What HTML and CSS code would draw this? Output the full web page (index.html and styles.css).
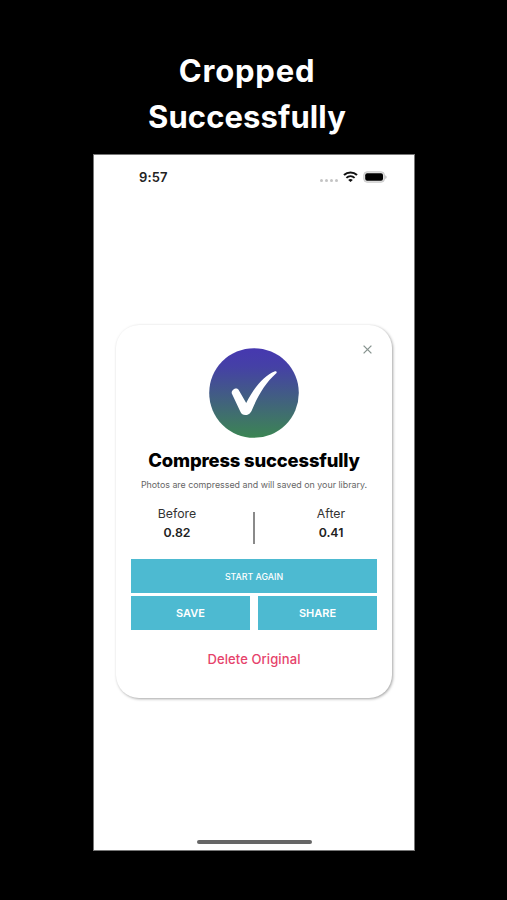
FILE: index.html
```
<!DOCTYPE html>
<html lang="en">
<head>
    <meta charset="UTF-8">
    <meta name="viewport" content="width=device-width, initial-scale=1.0">
    <title>Cropped Successfully</title>
    <link rel="stylesheet" href="styles.css">
</head>
<body>
    <h1 class="headline"><span class="line-one">Cropped</span><br><span class="line-two">Successfully</span></h1>
    <div class="screen">
        <!-- Status bar -->
        <div class="status-bar">
            <span class="time">9:57</span>
            <div class="status-icons">
                <div class="dots"><i></i><i></i><i></i><i></i></div>
                <svg class="wifi" width="15" height="11" viewBox="0 0 15 11">
                    <path d="M1 4.1C4.7 .6 10.3 .6 14 4.1" fill="none" stroke="#111" stroke-width="2.1"/>
                    <path d="M3.4 6.9C5.8 4.7 9.2 4.7 11.6 6.9" fill="none" stroke="#111" stroke-width="1.9"/>
                    <path d="M5.2 8.9C6.5 7.7 8.5 7.7 9.8 8.9L7.5 11Z" fill="#111"/>
                </svg>
                <svg class="battery" width="24" height="12" viewBox="0 0 24 12">
                    <rect x=".8" y=".8" width="20.6" height="10.4" rx="3.2" fill="#e4e4e4" stroke="#c8c8c8"/>
                    <rect x="2.2" y="2.2" width="17.8" height="7.6" rx="2" fill="#000"/>
                    <path d="M22.4 4.2V8C23.9 7.2 23.9 5 22.4 4.2Z" fill="#aaa"/>
                </svg>
            </div>
        </div>

        <!-- Result popup -->
        <div class="card">
            <svg class="close" width="9" height="9" viewBox="0 0 9 9">
                <path d="M.6 .6L8.4 8.4M8.4 .6L.6 8.4" stroke="#87938f" stroke-width="1.3"/>
            </svg>
            <svg class="check" width="90" height="90" viewBox="0 0 90 90">
                <defs>
                    <linearGradient id="fade" x1="0" y1="0" x2="0" y2="1">
                        <stop offset="0" stop-color="#4638b0"/>
                        <stop offset=".2" stop-color="#4540a6"/>
                        <stop offset=".8" stop-color="#3f7468"/>
                        <stop offset="1" stop-color="#3b8553"/>
                    </linearGradient>
                </defs>
                <circle cx="45" cy="45" r="44.8" fill="url(#fade)"/>
                <path d="M22.8 45.5C21.8 42 27.4 38.6 29.4 41.6L37.2 55C44.5 40.5 54.5 27.6 66 23.2C67.6 22.8 68.4 24.4 67 25.6C57 34.6 49.6 46.4 43.4 61C41.8 65.6 39 67.2 36.2 67C34 67 32.4 66 31.4 63.8Z" fill="#fff"/>
            </svg>
            <h2 class="title">Compress successfully</h2>
            <p class="note">Photos are compressed and will saved on your library.</p>
            <div class="stats">
                <div class="stat">
                    <span class="label">Before</span>
                    <span class="value">0.82</span>
                </div>
                <div class="divider"></div>
                <div class="stat">
                    <span class="label">After</span>
                    <span class="value">0.41</span>
                </div>
            </div>
            <button class="btn btn-small">START AGAIN</button>
            <div class="btn-row">
                <button class="btn">SAVE</button>
                <button class="btn">SHARE</button>
            </div>
            <a class="delete">Delete Original</a>
        </div>

        <div class="home-bar"></div>
    </div>
</body>
</html>
```

FILE: styles.css
```
* {
    box-sizing: border-box;
}
body {
    margin: 0;
    height: 900px;
    background-color: #000;
    font-family: Inter, "Liberation Sans", sans-serif;
    overflow: hidden;
}
.headline {
    margin: 0;
    padding: 48px 0 0 0;
    width: 494px;
    height: 154px;
    color: #fff;
    font-size: 31px;
    font-weight: 700;
    line-height: 46px;
    text-align: center;
}
.line-one {
    letter-spacing: 0.8px;
}
.line-two {
    letter-spacing: 0.1px;
}
.screen {
    display: flex;
    flex-direction: column;
    align-items: center;
    margin-left: 93px;
    width: 322px;
    height: 697px;
    background-color: #fff;
    border: 1px solid #777;
}
.status-bar {
    display: flex;
    justify-content: space-between;
    align-items: center;
    width: 100%;
    height: 43px;
    padding: 0 27px 0 45px;
}
.time {
    color: #222;
    font-size: 13px;
    font-weight: 600;
    letter-spacing: 0.1px;
}
.status-icons {
    display: flex;
    align-items: center;
    gap: 5px;
}
.dots {
    display: flex;
    gap: 2px;
    padding-top: 8px;
}
.dots i {
    width: 3px;
    height: 3px;
    border-radius: 50%;
    background-color: #c4c4c4;
}
.card {
    position: relative;
    display: flex;
    flex-direction: column;
    align-items: center;
    margin-top: 127px;
    width: 276px;
    height: 373px;
    padding: 23px 15px 0;
    background-color: #fff;
    border-radius: 23px;
    box-shadow: 1px 1px 3px rgba(0, 0, 0, 0.36);
}
.close {
    position: absolute;
    top: 20px;
    right: 20px;
}
.check {
    flex: none;
}
.title {
    margin: 10px 0 0;
    color: #000;
    font-size: 18.4px;
    font-weight: 800;
    line-height: 24px;
    letter-spacing: -0.15px;
    white-space: nowrap;
}
.note {
    margin: 7px 0 0;
    color: #666;
    font-size: 8.87px;
    line-height: 12px;
    white-space: nowrap;
}
.stats {
    display: flex;
    justify-content: space-between;
    width: 100%;
    height: 55px;
    margin-top: 13px;
}
.stat {
    display: flex;
    flex-direction: column;
    align-items: center;
    width: 92px;
}
.label {
    color: #333;
    font-size: 12.3px;
    line-height: 19px;
}
.value {
    color: #222;
    font-size: 12.3px;
    font-weight: 600;
    line-height: 19px;
}
.divider {
    width: 2px;
    height: 32px;
    margin-top: 8px;
    background-color: #8a8a8a;
}
.btn {
    flex: 1;
    height: 34px;
    padding: 0;
    border: none;
    background-color: #4dbad1;
    color: #fff;
    font-family: inherit;
    font-size: 11px;
    font-weight: 600;
}
.btn-small {
    flex: none;
    width: 100%;
    font-size: 8.8px;
    font-weight: 500;
}
.btn-row {
    display: flex;
    gap: 8px;
    width: 100%;
    margin-top: 3px;
}
.delete {
    margin-top: 19px;
    color: #e6426b;
    font-size: 13px;
    font-weight: 500;
    line-height: 20px;
    letter-spacing: 0.1px;
}
.home-bar {
    width: 115px;
    height: 4px;
    margin-top: auto;
    margin-bottom: 6px;
    border-radius: 2px;
    background-color: #666;
}
```
